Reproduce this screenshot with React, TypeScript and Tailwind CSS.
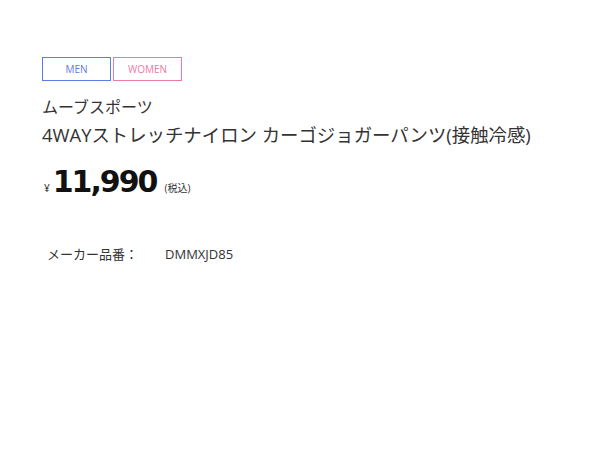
import React from 'react'

const App: React.FC = () => {
  return (
    <div className="w-[600px] h-[450px] bg-white text-[#333] font-['Open_Sans','Noto_Sans_CJK_JP',sans-serif]">
      <div className="pl-[42px] pt-[57px]">
        {/* Gender tags */}
        <div className="flex gap-[2px]">
          <div className="w-[69px] h-[24px] border border-[#5b7be6] text-[#5b7be6] text-[10px] flex items-center justify-center">
            MEN
          </div>
          <div className="w-[69px] h-[24px] border border-[#ee7aa3] text-[#ee7aa3] text-[10px] flex items-center justify-center">
            WOMEN
          </div>
        </div>

        <div className="mt-[15px] text-[16px] leading-[22px]">ムーブスポーツ</div>
        <div className="mt-[3px] text-[18.4px] leading-[28px]">4WAYストレッチナイロン カーゴジョガーパンツ(接触冷感)</div>

        {/* Price */}
        <div className="mt-[13px] flex items-baseline text-[#111]">
          <span className="text-[10px] mr-[3px] ml-[2px]">¥</span>
          <span className="text-[30px] font-bold font-['DejaVu_Sans',sans-serif] leading-[40px] tracking-[-2px]">11,990</span>
          <span className="text-[10px] ml-[8px] text-[#333]">(税込)</span>
        </div>

        <div className="mt-[43px] flex text-[13px] text-[#333] pl-[5px]">
          <span className="w-[118px]">メーカー品番：</span>
          <span>DMMXJD85</span>
        </div>
      </div>
    </div>
  )
}

export default App
